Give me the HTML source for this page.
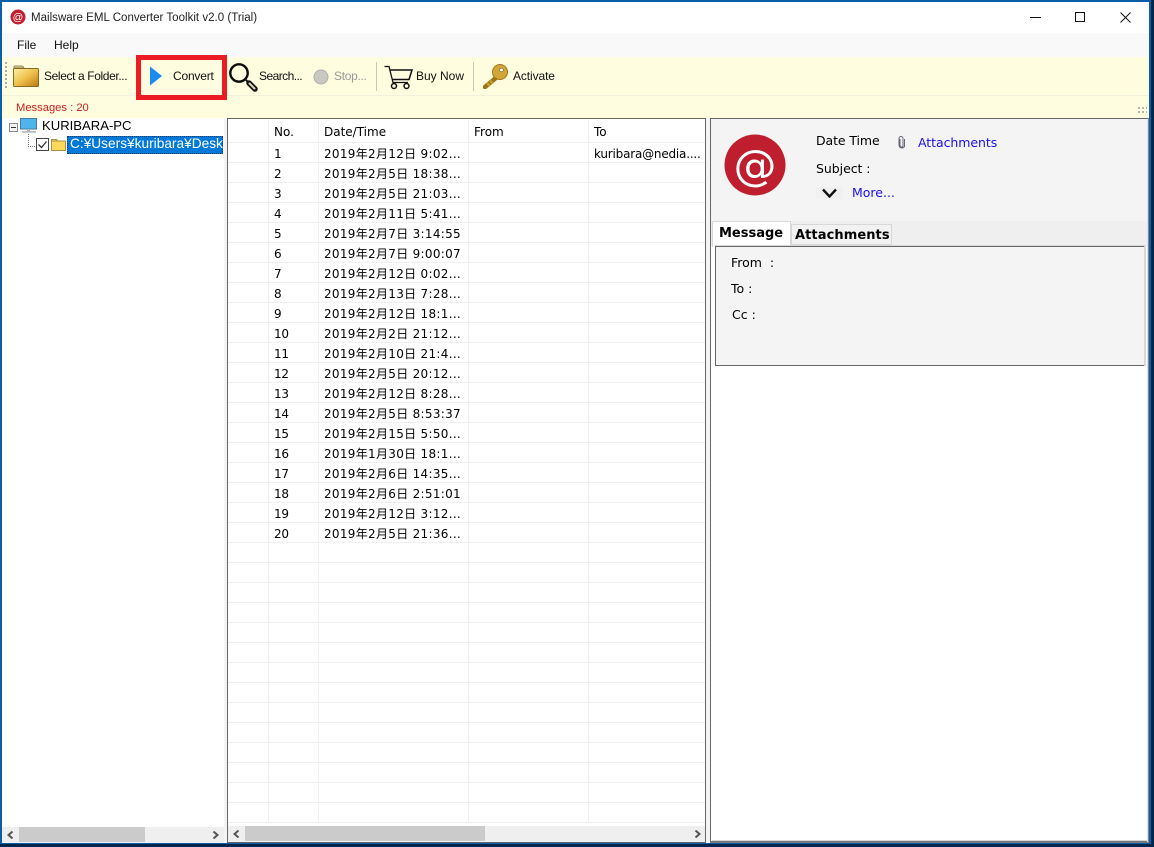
<!DOCTYPE html>
<html><head><meta charset="utf-8"><title>Mailsware EML Converter Toolkit</title>
<style>
html,body{margin:0;padding:0;width:1154px;height:847px;overflow:hidden;background:#04264a}
*{box-sizing:border-box}
div,span,svg{position:absolute}
.t{white-space:nowrap;color:#000;font-family:"DejaVu Sans","Noto Sans CJK JP",sans-serif;font-size:12px;line-height:16px}
.s{font-family:"Liberation Sans","Noto Sans CJK JP",sans-serif;font-size:12px;line-height:16px;white-space:nowrap;color:#111}
.h{height:1px;left:228px;width:477px;background:#efefef}
.v{width:1px;background:#efefef;top:120px;height:703px}
.n{left:274px;letter-spacing:-.2px}
.d{left:324px;font-family:"DejaVu Sans","Noto Sans CJK JP",sans-serif;font-size:12px;letter-spacing:.3px}
</style></head><body>
<div style="left:0;top:0;width:1154px;height:847px;background:#04264a"></div>
<div style="left:0;top:0;width:1151px;height:844px;background:#0a5fa8"></div>
<div style="left:2px;top:2px;width:1147px;height:841px;background:#fff"></div>

<!-- title -->
<svg style="left:10px;top:9px" width="16" height="16" viewBox="0 0 16 16"><circle cx="8" cy="8" r="7.5" fill="#c01f2f"/><text x="8" y="11.5" font-size="10.5" text-anchor="middle" fill="#fff" font-family="Liberation Sans">@</text></svg>
<div class="s" style="left:31px;top:10px;color:#222;font-size:11.55px">Mailsware EML Converter Toolkit v2.0 (Trial)</div>
<div style="left:1030px;top:17px;width:11px;height:1px;background:#111"></div>
<div style="left:1075px;top:12px;width:10px;height:10px;border:1px solid #111"></div>
<svg style="left:1120px;top:12px" width="11" height="11" viewBox="0 0 11 11"><path d="M.5.5l10 10M10.500.5l-10 10" stroke="#111" fill="none"/></svg>

<!-- menu -->
<div style="left:2px;top:33px;width:1147px;height:24px;background:#f9f9f9"></div>
<div class="s" style="left:17px;top:37px">File</div>
<div class="s" style="left:54px;top:37px">Help</div>

<!-- toolbar -->
<div style="left:2px;top:57px;width:1147px;height:38px;background:#fefde0"></div>
<div style="left:2px;top:95px;width:1147px;height:1px;background:#f3f1dc"></div>
<div style="left:2px;top:96px;width:1147px;height:22px;background:#fefde0"></div>
<div style="left:5px;top:62px;width:2px;height:26px;background-image:repeating-linear-gradient(#aaa 0 2px,transparent 2px 4px)"></div>

<svg style="left:13px;top:64px" width="26" height="23" viewBox="0 0 26 23"><defs><linearGradient id="f" x1="0" y1="0" x2="1" y2="1"><stop offset="0" stop-color="#fff1a8"/><stop offset=".5" stop-color="#eec04c"/><stop offset="1" stop-color="#b87a10"/></linearGradient></defs><path d="M1 6V3q0-1 1-1h7q1 0 2 2h-10z" fill="#d8cfa0" stroke="#9c8c50"/><rect x=".5" y="4.500" width="25" height="18" rx="1" fill="url(#f)" stroke="#8a6a20"/></svg>
<div class="s" style="left:44px;top:68px;letter-spacing:-.38px">Select a Folder...</div>

<div style="left:136px;top:55px;width:91px;height:45px;border:5px solid #ec1c24"></div>
<svg style="left:149px;top:66px" width="14" height="20" viewBox="0 0 14 20"><path d="M1 0.500L13 10L1 19.500z" fill="#1a8cf0"/></svg>
<div class="s" style="left:173px;top:68px;letter-spacing:-.2px">Convert</div>

<svg style="left:228px;top:62px" width="30" height="30" viewBox="0 0 30 30"><circle cx="11" cy="11" r="8.700" fill="none" stroke="#0c0c0c" stroke-width="2.400"/><path d="M18 18l3 3" stroke="#111" stroke-width="2"/><path d="M21 21l6 6" stroke="#111" stroke-width="5.500" stroke-linecap="round"/><path d="M21.500 21.500l5 5" stroke="#d8d4b8" stroke-width="2" stroke-linecap="round"/></svg>
<div class="s" style="left:259px;top:68px;letter-spacing:-.55px">Search...</div>

<svg style="left:313px;top:69px" width="16" height="16" viewBox="0 0 16 16"><circle cx="8" cy="8" r="7" fill="#c9c9c1" stroke="#b0b0aa"/></svg>
<div class="s" style="left:334px;top:68px;color:#9a9a9a;letter-spacing:-.3px">Stop...</div>
<div style="left:376px;top:62px;width:1px;height:29px;background:#c8c8bc"></div>

<svg style="left:384px;top:65px" width="29" height="25" viewBox="0 0 29 25"><path d="M.5 1.500H5l4 16h15" fill="none" stroke="#111" stroke-width="1.300"/><path d="M6 5H28L25 14.500H8.500" fill="none" stroke="#111" stroke-width="1.500"/><circle cx="10" cy="21" r="2.500" fill="none" stroke="#111" stroke-width="1.500"/><circle cx="22.500" cy="21" r="2.500" fill="none" stroke="#111" stroke-width="1.500"/></svg>
<div class="s" style="left:416px;top:68px">Buy Now</div>
<div style="left:473px;top:62px;width:1px;height:29px;background:#c8c8bc"></div>

<svg style="left:483px;top:63px" width="26" height="26" viewBox="0 0 26 26"><path d="M14 14L2 24" stroke="#9c7414" stroke-width="4.500" stroke-linecap="round"/><path d="M4 20l3 3M7 17.500l3 3" stroke="#c99a2c" stroke-width="2.500"/><circle cx="17" cy="9" r="7.500" fill="#d2a63a" stroke="#a07a18"/><circle cx="18.500" cy="7" r="1.800" fill="#fff" stroke="#7a5a10" stroke-width=".6"/></svg>
<div class="s" style="left:513px;top:68px;letter-spacing:-.1px">Activate</div>

<div class="s" style="left:16px;top:100px;color:#c8201c;font-size:11.200px">Messages : 20</div>
<div style="left:1137px;top:106px;width:10px;height:9px;background-image:radial-gradient(#aaa 1px,transparent 1.100px);background-size:4px 4px"></div>

<!-- tree -->
<div style="left:2px;top:118px;width:222px;height:709px;background:#fff"></div>
<div style="left:9px;top:123px;width:9px;height:9px;border:1px solid #8a8a9a;background:#f2f2f2"></div>
<div style="left:11px;top:127px;width:5px;height:1px;background:#333"></div>
<svg style="left:20px;top:118px" width="18" height="16" viewBox="0 0 18 16"><rect x=".5" y=".5" width="16" height="10.500" fill="#4fb4ee" stroke="#4a7a9c"/><rect x="7" y="11" width="3" height="2" fill="#a9b4bc"/><rect x="2" y="13" width="14" height="1.800" fill="#b8bfc4"/></svg>
<div class="t" style="left:42px;top:118px;font-family:'Liberation Sans',sans-serif;font-size:13.100px">KURIBARA-PC</div>
<div style="left:28px;top:134px;width:1px;height:13px;background-image:repeating-linear-gradient(#777 0 1px,transparent 1px 2px)"></div>
<div style="left:28px;top:146px;width:8px;height:1px;background-image:repeating-linear-gradient(90deg,#777 0 1px,transparent 1px 2px)"></div>
<svg style="left:36px;top:138px" width="13" height="13" viewBox="0 0 13 13"><rect x=".5" y=".5" width="12" height="12" fill="#fff" stroke="#444"/><path d="M2.500 6.500l3 3 5-6" fill="none" stroke="#333" stroke-width="1.300"/></svg>
<svg style="left:51px;top:138px" width="15" height="13" viewBox="0 0 15 13"><path d="M.5 3V1.500h5l1 1.500z" fill="#f4e08a" stroke="#a89040"/><rect x=".5" y="3" width="14" height="9.500" fill="#fbd95a" stroke="#a89040"/></svg>
<div style="left:67px;top:136px;width:156px;height:18px;background:#0078d7;outline:1px dotted #1a3a60;outline-offset:-1px;overflow:hidden"><span class="t" style="left:3px;top:0;color:#fff;font-family:'Liberation Sans','Noto Sans CJK JP',sans-serif;font-size:13.700px">C:¥Users¥kuribara¥Desktop</span></div>
<!-- left scrollbar -->
<div style="left:2px;top:827px;width:222px;height:16px;background:#efefef"></div>
<div style="left:19px;top:827px;width:126px;height:15px;background:#cbcbcb"></div>
<svg style="left:7px;top:831px" width="7" height="8" viewBox="0 0 7 8"><path d="M5.500.5L1.500 4l4 3.500" fill="none" stroke="#555" stroke-width="2"/></svg>
<svg style="left:212px;top:831px" width="7" height="8" viewBox="0 0 7 8"><path d="M1.500.5L5.500 4l-4 3.500" fill="none" stroke="#555" stroke-width="2"/></svg>

<!-- splitter -->
<div style="left:224px;top:118px;width:3px;height:725px;background:#f4f4f4"></div>
<div style="left:706px;top:118px;width:4px;height:725px;background:#f4f4f4"></div>

<!-- table -->
<div style="left:227px;top:118px;width:479px;height:725px;background:#fff;border:1px solid #666"></div>
<div class="v" style="left:268px"></div><div class="v" style="left:318px"></div><div class="v" style="left:468px"></div><div class="v" style="left:588px"></div>
<div class="t" style="left:274px;top:124px">No.</div>
<div class="t" style="left:324px;top:124px">Date/Time</div>
<div class="t" style="left:474px;top:124px">From</div>
<div class="t" style="left:594px;top:124px">To</div>

<div class="h" style="top:142px"></div><div class="h" style="top:162px"></div><div class="h" style="top:182px"></div><div class="h" style="top:202px"></div><div class="h" style="top:222px"></div><div class="h" style="top:242px"></div><div class="h" style="top:262px"></div><div class="h" style="top:282px"></div><div class="h" style="top:302px"></div><div class="h" style="top:322px"></div><div class="h" style="top:342px"></div><div class="h" style="top:362px"></div><div class="h" style="top:382px"></div><div class="h" style="top:402px"></div><div class="h" style="top:422px"></div><div class="h" style="top:442px"></div><div class="h" style="top:462px"></div><div class="h" style="top:482px"></div><div class="h" style="top:502px"></div><div class="h" style="top:522px"></div><div class="h" style="top:542px"></div><div class="h" style="top:562px"></div><div class="h" style="top:582px"></div><div class="h" style="top:602px"></div><div class="h" style="top:622px"></div><div class="h" style="top:642px"></div><div class="h" style="top:662px"></div><div class="h" style="top:682px"></div><div class="h" style="top:702px"></div><div class="h" style="top:722px"></div><div class="h" style="top:742px"></div><div class="h" style="top:762px"></div><div class="h" style="top:782px"></div><div class="h" style="top:802px"></div><div class="h" style="top:822px"></div>

<div class="t n" style="top:146px">1</div><div class="t d" style="top:146px">2019年2月12日 9:02...</div>
<div class="t" style="left:594px;top:146px;letter-spacing:-.2px">kuribara@nedia....</div>
<div class="t n" style="top:166px">2</div><div class="t d" style="top:166px">2019年2月5日 18:38...</div>
<div class="t n" style="top:186px">3</div><div class="t d" style="top:186px">2019年2月5日 21:03...</div>
<div class="t n" style="top:206px">4</div><div class="t d" style="top:206px">2019年2月11日 5:41...</div>
<div class="t n" style="top:226px">5</div><div class="t d" style="top:226px">2019年2月7日 3:14:55</div>
<div class="t n" style="top:246px">6</div><div class="t d" style="top:246px">2019年2月7日 9:00:07</div>
<div class="t n" style="top:266px">7</div><div class="t d" style="top:266px">2019年2月12日 0:02...</div>
<div class="t n" style="top:286px">8</div><div class="t d" style="top:286px">2019年2月13日 7:28...</div>
<div class="t n" style="top:306px">9</div><div class="t d" style="top:306px">2019年2月12日 18:1...</div>
<div class="t n" style="top:326px">10</div><div class="t d" style="top:326px">2019年2月2日 21:12...</div>
<div class="t n" style="top:346px">11</div><div class="t d" style="top:346px">2019年2月10日 21:4...</div>
<div class="t n" style="top:366px">12</div><div class="t d" style="top:366px">2019年2月5日 20:12...</div>
<div class="t n" style="top:386px">13</div><div class="t d" style="top:386px">2019年2月12日 8:28...</div>
<div class="t n" style="top:406px">14</div><div class="t d" style="top:406px">2019年2月5日 8:53:37</div>
<div class="t n" style="top:426px">15</div><div class="t d" style="top:426px">2019年2月15日 5:50...</div>
<div class="t n" style="top:446px">16</div><div class="t d" style="top:446px">2019年1月30日 18:1...</div>
<div class="t n" style="top:466px">17</div><div class="t d" style="top:466px">2019年2月6日 14:35...</div>
<div class="t n" style="top:486px">18</div><div class="t d" style="top:486px">2019年2月6日 2:51:01</div>
<div class="t n" style="top:506px">19</div><div class="t d" style="top:506px">2019年2月12日 3:12...</div>
<div class="t n" style="top:526px">20</div><div class="t d" style="top:526px">2019年2月5日 21:36...</div>

<!-- table scrollbar -->
<div style="left:228px;top:826px;width:477px;height:16px;background:#efefef"></div>
<div style="left:245px;top:826px;width:240px;height:15px;background:#cbcbcb"></div>
<svg style="left:233px;top:830px" width="7" height="8" viewBox="0 0 7 8"><path d="M5.500.5L1.500 4l4 3.500" fill="none" stroke="#555" stroke-width="2"/></svg>
<svg style="left:694px;top:830px" width="7" height="8" viewBox="0 0 7 8"><path d="M1.500.5L5.500 4l-4 3.500" fill="none" stroke="#555" stroke-width="2"/></svg>

<!-- right pane -->
<div style="left:710px;top:118px;width:439px;height:725px;background:#fff;border:1px solid #666;border-right:2px solid #888;border-bottom:2px solid #777"></div>
<div style="left:711px;top:119px;width:437px;height:102px;background:#f4f4f4"></div>
<div style="left:711px;top:221px;width:437px;height:25px;background:#efefef"></div>
<svg style="left:724px;top:134px" width="62" height="62" viewBox="0 0 62 62"><circle cx="31" cy="31" r="30.500" fill="#bf1e2e"/><text x="31" y="46" font-size="43" text-anchor="middle" fill="#fff" font-family="DejaVu Sans">@</text></svg>
<div class="t" style="left:816px;top:133px;font-size:12.500px;letter-spacing:-.1px">Date Time</div>
<svg style="left:897px;top:136px" width="9" height="13" viewBox="0 0 9 13"><path d="M3 3v6.500a1.500 1.500 0 0 0 3 0V2.500a2 2 0 0 0-4 0V9.500a3 3 0 0 0 5.500 1V3" fill="none" stroke="#667" stroke-width="1"/></svg>
<div class="t" style="left:918px;top:135px;font-size:12.500px;color:#1a10f0;letter-spacing:-.05px">Attachments</div>
<div class="t" style="left:816px;top:161px;font-size:12.500px;letter-spacing:-.05px">Subject :</div>
<div style="left:816px;top:187px;width:27px;height:12px;background:#f0f0f0"></div>
<svg style="left:822px;top:188px" width="15" height="10" viewBox="0 0 15 10"><path d="M1 1.500L7.500 8.500l6.500-7" fill="none" stroke="#111" stroke-width="2.400"/></svg>
<div class="t" style="left:852px;top:185px;font-size:12.500px;color:#1a10f0">More...</div>

<div style="left:712px;top:221px;width:79px;height:26px;background:#fff;border:1px solid #d8d8d8;border-bottom:none"></div>
<div class="t" style="left:719px;top:226px;font-size:13px;font-weight:bold">Message</div>
<div style="left:791px;top:224px;width:101px;height:21px;background:#f2f2f2;border:1px solid #d8d8d8"></div>
<div class="t" style="left:795px;top:228px;font-size:13px;font-weight:bold;letter-spacing:.08px">Attachments</div>

<div style="left:715px;top:245px;width:431px;height:121px;background:#d8d8d8"></div>
<div style="left:715px;top:246px;width:429px;height:120px;background:#f4f4f4;border:1px solid #666;border-right:none"></div>
<div class="t" style="left:731px;top:255px;font-size:12.500px">From&nbsp; :</div>
<div class="t" style="left:731px;top:281px;font-size:12.500px">To :</div>
<div class="t" style="left:732px;top:307px;font-size:12.500px">Cc :</div>
<div style="left:1147px;top:120px;width:1px;height:722px;background:#e0e0e0"></div>
<div style="left:712px;top:840px;width:435px;height:1px;background:#d4d4d4"></div>
</body></html>
